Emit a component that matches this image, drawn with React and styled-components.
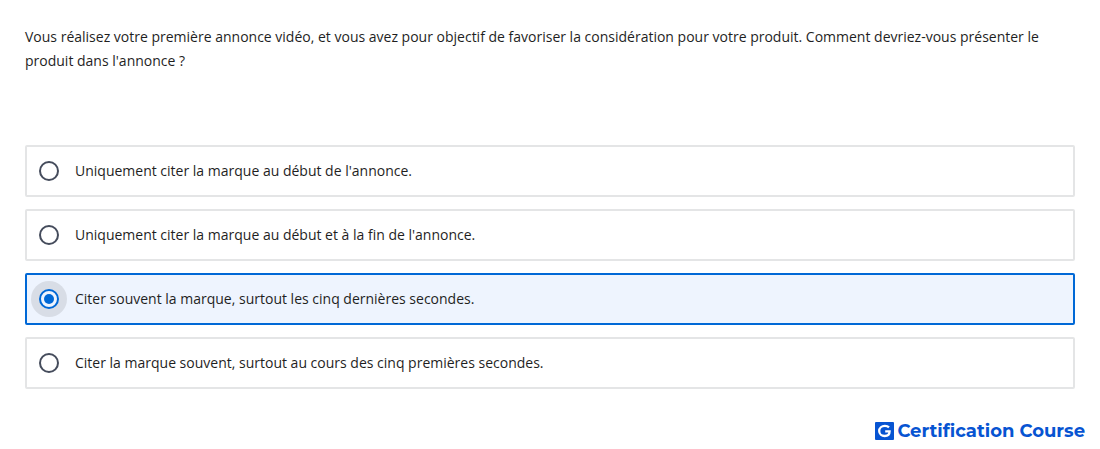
import React, { useState } from "react";
import styled, { createGlobalStyle } from "styled-components";

const GlobalStyle = createGlobalStyle`
  *, *::before, *::after { box-sizing: border-box; }
  body {
    margin: 0;
    background: #fff;
    color: #1f1f1f;
    font-family: "Open Sans", "Noto Sans", sans-serif;
    font-size: 14px;
    line-height: 24px;
  }
`;

const Page = styled.main`
  padding: 25px 25px 0;
`;

const Question = styled.fieldset`
  margin: 0;
  padding: 0;
  border: 0;
  min-width: 0;
`;

const Prompt = styled.legend`
  padding: 0;
  margin-bottom: 72px;
`;

const Options = styled.div`
  display: flex;
  flex-direction: column;
  gap: 12px;
`;

const Option = styled.label`
  display: flex;
  align-items: center;
  gap: 8px;
  min-height: 52px;
  padding: 6px 4px;
  border: 2px solid ${(p) => (p.$selected ? "#0068d6" : "#e4e5e6")};
  border-radius: 2px;
  background: ${(p) => (p.$selected ? "#eef4fe" : "#fff")};
  cursor: pointer;
`;

const Halo = styled.span`
  display: grid;
  place-items: center;
  flex: none;
  width: 36px;
  height: 36px;
  border-radius: 50%;
  background: ${(p) => (p.$selected ? "#d8dde6" : "transparent")};
`;

const Radio = styled.input`
  appearance: none;
  display: grid;
  place-items: center;
  width: 20px;
  height: 20px;
  margin: 0;
  border: 2px solid #454c5c;
  border-radius: 50%;
  background: transparent;
  outline: none;

  &:checked {
    border-color: #0068d6;
    background: #eef4fe;
  }
  &:checked::before {
    content: "";
    width: 10px;
    height: 10px;
    border-radius: 50%;
    background: #0068d6;
  }
`;

const Footer = styled.footer`
  display: flex;
  justify-content: flex-end;
  align-items: center;
  gap: 3px;
  margin-top: 29px;
  margin-right: -10px;
  color: #0754d2;
  font: 700 18px/26px Montserrat, Inter, sans-serif;
`;

const ANSWERS = [
  "Uniquement citer la marque au début de l'annonce.",
  "Uniquement citer la marque au début et à la fin de l'annonce.",
  "Citer souvent la marque, surtout les cinq dernières secondes.",
  "Citer la marque souvent, surtout au cours des cinq premières secondes.",
];

const Logo = () => (
  <svg width="19" height="18" viewBox="0 0 19 18" aria-hidden="true">
    <rect width="19" height="18" rx="1" fill="#0754d2" />
    <path
      d="M14 5.4C12.900 4.300 11.500 3.900 9.900 3.900C6.700 3.900 4.200 6 4.200 9C4.200 12 6.700 14 9.700 14C12.700 14 14.600 12.300 14.600 9.300H10.200"
      fill="none"
      stroke="#fff"
      strokeWidth="2.300"
    />
  </svg>
);

export default function App() {
  const [selected, setSelected] = useState(2);
  return (
    <>
      <GlobalStyle />
      <Page>
        <Question>
          <Prompt>
            Vous réalisez votre première annonce vidéo, et vous avez pour objectif de favoriser la
            considération pour votre produit. Comment devriez-vous présenter le produit dans
            l'annonce ?
          </Prompt>
          <Options>
            {ANSWERS.map((text, i) => (
              <Option key={text} $selected={i === selected}>
                <Halo $selected={i === selected}>
                  <Radio
                    type="radio"
                    name="answer"
                    checked={i === selected}
                    onChange={() => setSelected(i)}
                  />
                </Halo>
                {text}
              </Option>
            ))}
          </Options>
        </Question>
        <Footer>
          <Logo />
          Certification Course
        </Footer>
      </Page>
    </>
  );
}
